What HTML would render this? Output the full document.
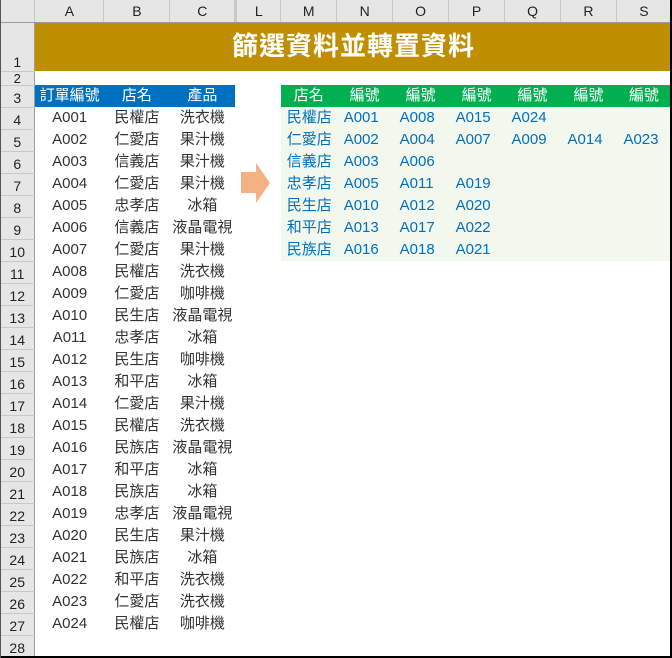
<!DOCTYPE html>
<html><head><meta charset="utf-8"><style>
*{margin:0;padding:0;box-sizing:border-box}
body{width:672px;height:658px;overflow:hidden;background:#fff;font-family:"Liberation Sans","Noto Sans CJK TC",sans-serif;position:relative}
table{border-collapse:collapse;table-layout:fixed;position:absolute;left:0;top:0}
tr{height:22px}
td{height:22px;font-size:15px;text-align:center;white-space:nowrap;overflow:hidden;color:#333;padding:0;line-height:20px}
td.rh{background:#e6e6e6;border-right:1px solid #9c9c9c;border-bottom:1px solid #c8c8c8;color:#222;font-size:14px;line-height:18px;vertical-align:bottom}
tr.ch td{background:#e6e6e6;border-right:1px solid #c8c8c8;border-bottom:1px solid #9c9c9c;font-size:14px;color:#222}
.b{background:#0070c0;color:#fff}
.g{background:#00b050;color:#fff}
.lg{background:#f2f8ee;color:#0070c0;text-align:left;padding-left:6px}
.lgc{background:#f2f8ee;color:#0070c0;text-align:left;padding-left:7px}
</style></head><body>
<table>
<colgroup><col style="width:35px"><col style="width:69px"><col style="width:66px"><col style="width:65px"><col style="width:2px"><col style="width:44px"><col style="width:56px"><col style="width:56px"><col style="width:56px"><col style="width:56px"><col style="width:56px"><col style="width:56px"><col style="width:55px"></colgroup>
<tr class="ch"><td></td><td>A</td><td>B</td><td>C</td><td style="background:#c8c8c8"></td><td>L</td><td>M</td><td>N</td><td>O</td><td>P</td><td>Q</td><td>R</td><td>S</td></tr>
<tr style="height:49px"><td class="rh" style="height:49px">1</td><td colspan="12" style="height:49px;background:#bf8f00;color:#fff;font-size:26px;font-weight:bold;letter-spacing:1px;line-height:47px">篩選資料並轉置資料</td></tr>
<tr style="height:14px"><td class="rh" style="height:14px;line-height:12px;font-size:13px">2</td><td colspan="12" style="height:14px"></td></tr>
<tr><td class="rh">3</td><td class="b">訂單編號</td><td class="b">店名</td><td class="b">產品</td><td></td><td></td><td class="g">店名</td><td class="g">編號</td><td class="g">編號</td><td class="g">編號</td><td class="g">編號</td><td class="g">編號</td><td class="g">編號</td></tr>
<tr><td class="rh">4</td><td>A001</td><td>民權店</td><td>洗衣機</td><td></td><td></td><td class="lg">民權店</td><td class="lgc">A001</td><td class="lgc">A008</td><td class="lgc">A015</td><td class="lgc">A024</td><td class="lgc"></td><td class="lgc"></td></tr>
<tr><td class="rh">5</td><td>A002</td><td>仁愛店</td><td>果汁機</td><td></td><td></td><td class="lg">仁愛店</td><td class="lgc">A002</td><td class="lgc">A004</td><td class="lgc">A007</td><td class="lgc">A009</td><td class="lgc">A014</td><td class="lgc">A023</td></tr>
<tr><td class="rh">6</td><td>A003</td><td>信義店</td><td>果汁機</td><td></td><td></td><td class="lg">信義店</td><td class="lgc">A003</td><td class="lgc">A006</td><td class="lgc"></td><td class="lgc"></td><td class="lgc"></td><td class="lgc"></td></tr>
<tr><td class="rh">7</td><td>A004</td><td>仁愛店</td><td>果汁機</td><td></td><td></td><td class="lg">忠孝店</td><td class="lgc">A005</td><td class="lgc">A011</td><td class="lgc">A019</td><td class="lgc"></td><td class="lgc"></td><td class="lgc"></td></tr>
<tr><td class="rh">8</td><td>A005</td><td>忠孝店</td><td>冰箱</td><td></td><td></td><td class="lg">民生店</td><td class="lgc">A010</td><td class="lgc">A012</td><td class="lgc">A020</td><td class="lgc"></td><td class="lgc"></td><td class="lgc"></td></tr>
<tr><td class="rh">9</td><td>A006</td><td>信義店</td><td>液晶電視</td><td></td><td></td><td class="lg">和平店</td><td class="lgc">A013</td><td class="lgc">A017</td><td class="lgc">A022</td><td class="lgc"></td><td class="lgc"></td><td class="lgc"></td></tr>
<tr><td class="rh">10</td><td>A007</td><td>仁愛店</td><td>果汁機</td><td></td><td></td><td class="lg">民族店</td><td class="lgc">A016</td><td class="lgc">A018</td><td class="lgc">A021</td><td class="lgc"></td><td class="lgc"></td><td class="lgc"></td></tr>
<tr><td class="rh">11</td><td>A008</td><td>民權店</td><td>洗衣機</td><td colspan="9"></td></tr>
<tr><td class="rh">12</td><td>A009</td><td>仁愛店</td><td>咖啡機</td><td colspan="9"></td></tr>
<tr><td class="rh">13</td><td>A010</td><td>民生店</td><td>液晶電視</td><td colspan="9"></td></tr>
<tr><td class="rh">14</td><td>A011</td><td>忠孝店</td><td>冰箱</td><td colspan="9"></td></tr>
<tr><td class="rh">15</td><td>A012</td><td>民生店</td><td>咖啡機</td><td colspan="9"></td></tr>
<tr><td class="rh">16</td><td>A013</td><td>和平店</td><td>冰箱</td><td colspan="9"></td></tr>
<tr><td class="rh">17</td><td>A014</td><td>仁愛店</td><td>果汁機</td><td colspan="9"></td></tr>
<tr><td class="rh">18</td><td>A015</td><td>民權店</td><td>洗衣機</td><td colspan="9"></td></tr>
<tr><td class="rh">19</td><td>A016</td><td>民族店</td><td>液晶電視</td><td colspan="9"></td></tr>
<tr><td class="rh">20</td><td>A017</td><td>和平店</td><td>冰箱</td><td colspan="9"></td></tr>
<tr><td class="rh">21</td><td>A018</td><td>民族店</td><td>冰箱</td><td colspan="9"></td></tr>
<tr><td class="rh">22</td><td>A019</td><td>忠孝店</td><td>液晶電視</td><td colspan="9"></td></tr>
<tr><td class="rh">23</td><td>A020</td><td>民生店</td><td>果汁機</td><td colspan="9"></td></tr>
<tr><td class="rh">24</td><td>A021</td><td>民族店</td><td>冰箱</td><td colspan="9"></td></tr>
<tr><td class="rh">25</td><td>A022</td><td>和平店</td><td>洗衣機</td><td colspan="9"></td></tr>
<tr><td class="rh">26</td><td>A023</td><td>仁愛店</td><td>洗衣機</td><td colspan="9"></td></tr>
<tr><td class="rh">27</td><td>A024</td><td>民權店</td><td>咖啡機</td><td colspan="9"></td></tr>
<tr><td class="rh">28</td><td colspan="12"></td></tr>
</table>
<svg style="position:absolute;left:240px;top:162px" width="32" height="42"><polygon points="1,10 16,10 16,1 30,21 16,41 16,31 1,31" fill="#f4b183"/></svg>
<div style="position:absolute;right:0;top:0;width:2px;height:658px;background:#000"></div>
<div style="position:absolute;left:0;bottom:0;width:672px;height:2px;background:#000"></div>
<div style="position:absolute;left:0;top:0;width:1px;height:658px;background:#555"></div>
</body></html>
